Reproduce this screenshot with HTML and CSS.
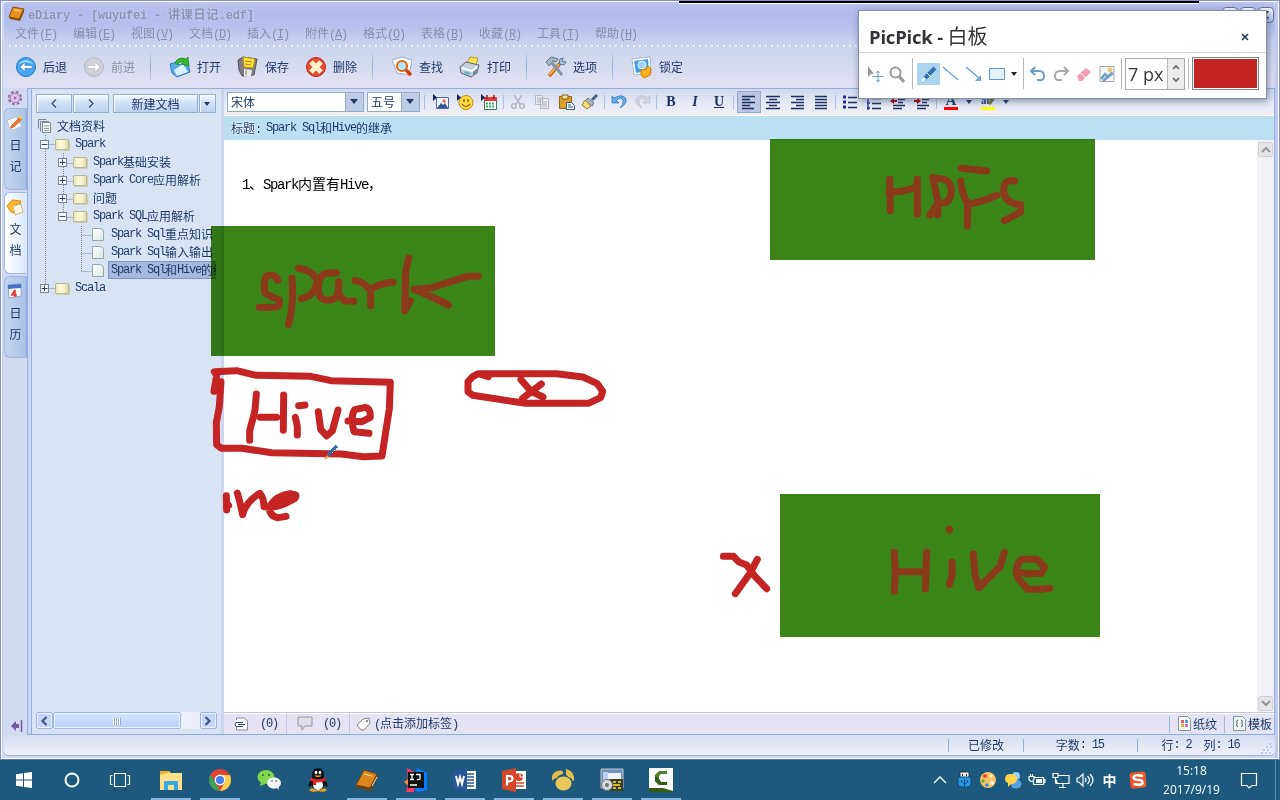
FILE: index.html
```html
<!DOCTYPE html>
<html lang="zh-CN">
<head>
<meta charset="utf-8">
<title>eDiary</title>
<link rel="stylesheet" href="styles.css">
</head>
<body>
<div class="desktop">
<div class="window">
  <header class="chrome">
    <div class="titlebar">
      <svg width="18" height="18" viewBox="0 0 18 18"><path d="M2 12L6 2l11 2-5 10z" fill="#e8931c" stroke="#8a4a10"/><path d="M2 12l10 2 5-10v3l-4 9-10-2z" fill="#8a4a10"/><path d="M7.500 5l6 1" stroke="#ffd070" stroke-width="1.500"/></svg>
      <span class="title"><span class="l">eDiary - [wuyufei - </span>讲课日记<span class="l">.edf]</span></span>
      <div class="winbtns"><i></i><i></i><i class="x">✕</i></div>
    </div>
    <nav class="menu">
      <span>文件<b>(<u>F</u>)</b></span><span>编辑<b>(<u>E</u>)</b></span><span>视图<b>(<u>V</u>)</b></span><span>文档<b>(<u>D</u>)</b></span><span>插入<b>(<u>I</u>)</b></span><span>附件<b>(<u>A</u>)</b></span><span>格式<b>(<u>O</u>)</b></span><span>表格<b>(<u>B</u>)</b></span><span>收藏<b>(<u>R</u>)</b></span><span>工具<b>(<u>T</u>)</b></span><span>帮助<b>(<u>H</u>)</b></span>
    </nav>
    <div class="dots"></div>
    <div class="toolbar">
      <div class="tool"><svg viewBox="0 0 24 24"><circle cx="12" cy="12" r="9.500" fill="#45a8ee" stroke="#2877c8"/><path d="M5 9a8 7 0 0 1 14 0q-7-4-14 0z" fill="#b8ecff"/><path d="M11 7l-5 5 5 5v-3.500h7v-3h-7z" fill="#fff" stroke="#2877c8" stroke-width=".6"/></svg>后退</div>
      <div class="tool off"><svg viewBox="0 0 24 24"><circle cx="12" cy="12" r="9.500" fill="#d0d0d6" stroke="#b8b8c2"/><path d="M13 7l5 5-5 5v-3.500H6v-3h7z" fill="#fff" stroke="#b8b8c2" stroke-width=".6"/></svg>前进</div>
      <div class="sep"></div>
      <div class="tool"><svg viewBox="0 0 24 24"><path d="M2 9l7-2 3 3 8-2 2 9-13 5-5-4z" fill="#5aa8e8" stroke="#3878b8"/><path d="M6 15l9-6 5 8-11 4z" fill="#d8f0ff"/><path d="M7 8q3-7 11-4l2-2 1 9-8-2 2-2q-4-1-5 3z" fill="#35b52c" stroke="#14821a" stroke-width=".7"/></svg>打开</div>
      <div class="tool"><svg viewBox="0 0 24 24"><path d="M2 5l5-3 14 2-3 16-12 1-3-6z" fill="#807c86" stroke="#565361"/><path d="M7 2l12 2-2 9-9-1z" fill="#ffe538" stroke="#b99418"/><path d="M8 14l8 1-1 6H8z" fill="#e8e8ef"/><path d="M10 15v5M9 6l7 1M9 9l6 1" stroke="#a28c30"/></svg>保存</div>
      <div class="tool"><svg viewBox="0 0 24 24"><circle cx="12" cy="12" r="9.500" fill="#e84830" stroke="#b82818"/><path d="M7 7l10 10M17 7L7 17" stroke="#fff5cc" stroke-width="5"/></svg>删除</div>
      <div class="sep"></div>
      <div class="tool"><svg viewBox="0 0 24 24"><path d="M2 5l10-3 10 3-3 15-12-2z" fill="#fff" stroke="#9daabc"/><circle cx="12" cy="11" r="5" fill="#b8e4ff" stroke="#e06a18" stroke-width="2.200"/><path d="M16 15l5 5" stroke="#d04010" stroke-width="3.500"/></svg>查找</div>
      <div class="tool"><svg viewBox="0 0 24 24"><path d="M9 8l3-6 8 1-2 7z" fill="#ffe54a" stroke="#a99a45"/><path d="M2 12l6-5 13 3-2 8-6 4-10-4z" fill="#c6ceda" stroke="#5a6674"/><path d="M4 13l10 3 5-4" stroke="#f7ffff" stroke-width="2" fill="none"/><path d="M7 16l6 2-2 2-5-2z" fill="#60b8d8"/><path d="M15 17l5-4v4l-5 4z" fill="#7b8793"/></svg>打印</div>
      <div class="sep"></div>
      <div class="tool"><svg viewBox="0 0 24 24"><path d="M5 21L18 6" stroke="#c87018" stroke-width="4"/><path d="M5 20L17 7" stroke="#f7b860" stroke-width="1.500"/><path d="M2 7l5-5 7 2-2 3-3-1-4 5z" fill="#a7b7c4" stroke="#637483"/><path d="M8 8l10 12" stroke="#8095a8" stroke-width="3"/><path d="M16 4l-1 5 5 1 2-3-4-1 1-3z" fill="#a7c4dc" stroke="#52789b"/></svg>选项</div>
      <div class="sep"></div>
      <div class="tool"><svg viewBox="0 0 24 24"><path d="M3 5l16-2 1 14-15 2z" fill="#439be5" stroke="#fff" stroke-width="2"/><path d="M2 4l18-2 1 16-17 2z" fill="none" stroke="#779ab9" stroke-width=".6"/><circle cx="12" cy="10" r="4" fill="#9bd0f8" stroke="#dff"/><path d="M11 15l5-1 2-3 3 3-1 6-6 3-3-3z" fill="#ffb31b" stroke="#d77800"/></svg>锁定</div>
    </div>
  </header>
  <div class="body">
    <aside class="rail">
      <div class="gear"><svg width="16" height="16" viewBox="0 0 16 16"><circle cx="8" cy="8" r="6" fill="none" stroke="#9b6fae" stroke-width="2.400" stroke-dasharray="2.800 1.900"/><circle cx="8" cy="8" r="4.500" fill="#dfc9e8" stroke="#a581b9"/><circle cx="8" cy="8" r="1.500" fill="#9b6fae"/></svg></div>
      <div class="tab"><svg width="18" height="18" viewBox="0 0 18 18"><path d="M1 6l9-3 6 9-9 4-4-3z" fill="#fff" stroke="#b7bfd0"/><path d="M5 12L14 3l2 2-8 8-3 1z" fill="#f07828" stroke="#c85010" stroke-width=".6"/><path d="M13 2l3 3" stroke="#f7c84a" stroke-width="2"/></svg><span>日</span><span>记</span></div>
      <div class="tab on"><svg width="18" height="18" viewBox="0 0 18 18"><path d="M1 8l5-6 9 1-1 3-6 1v8l-3-1z" fill="#ffb830" stroke="#df8618"/><path d="M7 8l8-2 2 8-8 3z" fill="#fffbe8" stroke="#d3b678"/></svg><span>文</span><span>档</span></div>
      <div class="tab"><svg width="18" height="18" viewBox="0 0 18 18"><path d="M2 3l13-1v12l-12 2z" fill="#fff" stroke="#8ea2c9"/><path d="M2 3l13-1v4L2 7z" fill="#4672c5"/><path d="M9 8l-3 5h5m-2-5v7" stroke="#e43838" stroke-width="1.700" fill="none"/></svg><span>日</span><span>历</span></div>
      <div class="collapse"><svg width="14" height="14" viewBox="0 0 14 14"><path d="M7 2L2 7l5 5V9h3V5H7z" fill="#7658a0"/><path d="M12.500 1v12" stroke="#7658a0" stroke-width="1.500"/></svg></div>
    </aside>
    <aside class="side">
      <div class="sidebtns"><div class="btn"><svg width="6" height="9"><path d="M5 .5L1 4.500l4 4" class="chev"/></svg></div><div class="btn"><svg width="6" height="9"><path d="M1 .5l4 4-4 4" class="chev"/></svg></div><div class="btn new">新建文档</div><div class="btn drop"><s class="tri"></s></div></div>
      <div class="tree">
        <svg class="guides" width="60" height="160" viewBox="0 0 60 160"><path d="M9.500 0v155M9.500 9.500h14M9.500 153.500h14M27.500 18v66M27.500 28.500h14M27.500 46.500h14M27.500 64.500h14M27.500 82.500h14M45.500 91v46M45.500 100.500h11M45.500 118.500h11M45.500 136.500h11" stroke="#7d8798" stroke-dasharray="1 1" fill="none"/></svg>
        <div class="node root"><svg width="15" height="16" viewBox="0 0 15 16"><path d="M1.500 10.500v-9h8" fill="none" stroke="#7d8b92"/><path d="M3.500 13.500v-10h8" fill="none" stroke="#7d8b92"/><path d="M5.500 4.500h8v10h-8z" fill="#f4faf4" stroke="#7d8b92"/><path d="M7 8h5M7 10.500h5M7 12.500h5" stroke="#8c9a9a"/></svg>文档资料</div>
        <div class="node"><i class="exp">−</i><i class="folder"></i><span class="l">Spark</span></div>
        <div class="node n2"><i class="exp">+</i><i class="folder"></i><span class="l">Spark</span>基础安装</div>
        <div class="node n2"><i class="exp">+</i><i class="folder"></i><span class="l">Spark Core</span>应用解析</div>
        <div class="node n2"><i class="exp">+</i><i class="folder"></i>问题</div>
        <div class="node n2"><i class="exp">−</i><i class="folder"></i><span class="l">Spark SQL</span>应用解析</div>
        <div class="node n3"><i class="file"></i><span class="l">Spark Sql</span>重点知识</div>
        <div class="node n3"><i class="file"></i><span class="l">Spark Sql</span>输入输出</div>
        <div class="node n3"><i class="file"></i><span class="sel"><span class="l">Spark Sql</span>和<span class="l">Hive</span>的继</span></div>
        <div class="node"><i class="exp">+</i><i class="folder"></i><span class="l">Scala</span></div>
      </div>
      <div class="hscroll"><div class="sbtn"><svg width="8" height="10"><path d="M6.500 1l-4 4 4 4" class="arr"/></svg></div><div class="thumb"><i></i></div><div class="track"></div><div class="sbtn"><svg width="8" height="10"><path d="M1.500 1l4 4-4 4" class="arr"/></svg></div></div>
    </aside>
    <main class="editor">
      <div class="format">
        <div class="combo font"><span>宋体</span><em><s class="tri"></s></em></div>
        <div class="combo size"><span>五号</span><em><s class="tri"></s></em></div>
        <div class="fsep f9"></div>
        <div class="fb"><svg viewBox="0 0 18 18"><path d="M1 1l4 3.500L1 8z" fill="#152358"/><path d="M4.500 4.500h12v11h-12z" fill="#eef6ff" stroke="#526aa0"/><path d="M5 15l4-5 2 2 2-2 3 5z" fill="#35588b"/><circle cx="12" cy="8" r="1.800" fill="#f07840"/></svg></div>
        <div class="fb"><svg viewBox="0 0 18 18"><circle cx="10" cy="9.500" r="7" fill="#ffda3a" stroke="#c88818"/><path d="M1 1l4 3.500L1 8z" fill="#152358"/><path d="M8 6v3m4-3v3M6 11q4 5 8 0" fill="none" stroke="#6d4b10" stroke-width="1.200"/></svg></div>
        <div class="fb"><svg viewBox="0 0 18 18"><path d="M4.500 4.500h12v12h-12z" fill="#fff" stroke="#27824b"/><path d="M4 4h13v4H4z" fill="#e33a35"/><path d="M6 10.500h9M6 13.500h9" stroke="#48a868" stroke-width="2" stroke-dasharray="2 1"/><path d="M7 2v4m7-4v4" stroke="#922" stroke-width="1.500"/><path d="M1 1l4 3.500L1 8z" fill="#152358"/></svg></div>
        <div class="fsep f5"></div>
        <div class="fb"><svg viewBox="0 0 18 18" fill="none" stroke="#b4b6c1" stroke-width="1.500"><path d="M5 2l6 9M13 2L7 11"/><circle cx="5" cy="13" r="2.300"/><circle cx="13" cy="13" r="2.300"/></svg></div>
        <div class="fb"><svg viewBox="0 0 18 18" fill="#e9eaf1" stroke="#b4b6c1"><path d="M2.500 2.500h7v9h-7zM7.500 5.500h8v10h-8z"/><path d="M9 9h5M9 11h5M9 13h5M4 5h3M4 7h3M4 9h3"/></svg></div>
        <div class="fb"><svg viewBox="0 0 18 18"><path d="M2.500 3.500h12v12h-12z" fill="#d8a32a" stroke="#8d6518"/><path d="M5 2h6v4H5z" fill="#f5df8b" stroke="#856522"/><path d="M9.500 9.500h5l3 3v4h-8z" fill="#f6f8ff" stroke="#405887"/><path d="M11 12h3m-3 2h5" stroke="#405887"/></svg></div>
        <div class="fb"><svg viewBox="0 0 18 18"><path d="M11 7l5-5" stroke="#4a5e95" stroke-width="3"/><path d="M7 5l6 5-2 3-7-5z" fill="#a9b4bd" stroke="#68748a"/><path d="M4 7l6 6-4 3-5-4z" fill="#f4dd77" stroke="#9e8530"/></svg></div>
        <div class="fsep f5"></div>
        <div class="fb"><svg viewBox="0 0 18 18"><path d="M2 3v7h7L6.500 7.500Q11 3 13 7q1 4-3 8 7-4 6-9-3-6-12-1z" fill="#62acea" stroke="#2d6fb4" stroke-width=".7"/></svg></div>
        <div class="fb"><svg viewBox="0 0 18 18"><path d="M16 3v7H9l2.500-2.500Q7 3 5 7q-1 4 3 8-7-4-6-9 3-6 12-1z" fill="#d5d7e0" stroke="#b5b8c5" stroke-width=".7"/></svg></div>
        <div class="fsep w4"></div>
        <div class="fb bt"><b>B</b></div><div class="fb bt"><em>I</em></div><div class="fb bt"><u>U</u></div>
        <div class="fsep f6"></div>
        <div class="fb on"><svg viewBox="0 0 18 18" class="al"><path d="M2 3.500h13M2 6.500h8M2 9.500h13M2 12.500h8M2 15.500h12"/></svg></div>
        <div class="fb"><svg viewBox="0 0 18 18" class="al"><path d="M2 3.500h14M5 6.500h8M2 9.500h14M5 12.500h8M2 15.500h14"/></svg></div>
        <div class="fb"><svg viewBox="0 0 18 18" class="al"><path d="M3 3.500h13M8 6.500h8M3 9.500h13M8 12.500h8M3 15.500h13"/></svg></div>
        <div class="fb"><svg viewBox="0 0 18 18" class="al"><path d="M3 3.500h12M3 6.500h12M3 9.500h12M3 12.500h12M3 15.500h12"/></svg></div>
        <div class="fsep f5"></div>
        <div class="fb"><svg viewBox="0 0 18 18" class="al"><path d="M2 4h3M2 9h3M2 14h3" stroke="#202da0" stroke-width="3"/><path d="M7 4.500h9M7 9.500h9M7 14.500h9"/></svg></div>
        <div class="fb"><svg viewBox="0 0 18 18" class="al"><path d="M3 2v15M2 5h3m-3 5h3m-3 5h3" stroke="#202d90"/><path d="M7 5.500h9M7 10.500h9M7 15.500h9"/></svg></div>
        <div class="fb"><svg viewBox="0 0 18 18" class="al"><path d="M3 3.500h13M9 6.500h7M9 9.500h5M4 12.500h12M4 15.500h9"/><path d="M1 8l4-3v2h3v2H5v2z" fill="#b20000" stroke="none"/></svg></div>
        <div class="fb"><svg viewBox="0 0 18 18" class="al"><path d="M3 3.500h13M9 6.500h7M9 9.500h5M4 12.500h12M4 15.500h9"/><path d="M8 8L4 5v2H1v2h3v2z" fill="#b20000" stroke="none"/></svg></div>
        <div class="fsep f5"></div>
        <div class="fb color"><b>A</b></div><div class="dd"><s class="tri sm"></s></div>
        <div class="fb mark"><b>ab</b><svg viewBox="0 0 18 18"><path d="M8 12l7-9" stroke="#777830" stroke-width="3"/></svg></div><div class="dd"><s class="tri sm"></s></div>
      </div>
      <div class="doctitle"><span class="lab">标题<span class="l">:</span></span><span class="l">Spark Sql</span>和<span class="l">Hive</span>的继承</div>
      <div class="page">
        <div class="text"><span class="l">1</span>、<span class="l">Spark</span>内置有<span class="l">Hive</span>，</div>
        <div class="vscroll"><div><svg width="10" height="7"><path d="M1 6l4-4 4 4" class="garr"/></svg></div><div><svg width="10" height="7"><path d="M1 1l4 4 4-4" class="garr"/></svg></div></div>
      </div>
      <div class="foot">
        <div class="f1"><svg width="16" height="14" viewBox="0 0 16 14"><path d="M3.500 3V1h8l3 3v9h-11v-3" fill="#f7f6fb" stroke="#8e8ba5"/><path d="M10 5.500H3q-2 2 0 4h7M5 7.500h7" fill="none" stroke="#344a70"/></svg><span class="l">(0)</span></div>
        <div class="f2"><svg width="16" height="15" viewBox="0 0 16 15"><path d="M1 1h14v9H8l-3 4v-4H1z" fill="#dfdde7" stroke="#9996a7"/></svg><span class="l">(0)</span></div>
        <div class="f3"><svg width="15" height="14" viewBox="0 0 15 14"><path d="M1 8l6-6 6-1 1 5-6 7H5z" fill="#fff" stroke="#818990"/><circle cx="11" cy="4" r="1.300" fill="#89919a"/></svg><span><span class="l">(</span>点击添加标签<span class="l">)</span></span></div>
        <div class="paper"><svg width="13" height="15" viewBox="0 0 13 15"><path d="M.5.500h9l3 3v11H.5z" fill="#fff" stroke="#7c9a9a"/><path d="M3 4h3v3H3z" fill="#f05858"/><path d="M7 4h3v3H7z" fill="#4499e8"/><path d="M3 8h3v3H3z" fill="#f5a838"/><path d="M7 8h3v3H7z" fill="#ee64bb"/></svg>纸纹</div>
        <div class="tpl"><svg width="13" height="15" viewBox="0 0 13 15"><path d="M.5.500h9l3 3v11H.5z" fill="#eff5f2" stroke="#7c9a9a"/><path d="M5 4Q3 4 4 7.500 3 11 5 11M8 4q2 0 1 3.500Q10 11 8 11" fill="none" stroke="#555"/></svg>模板</div>
      </div>
    </main>
  </div>
  <footer class="status"><div class="s1">已修改</div><div class="s2">字数<span class="l">: 15</span></div><div class="s3">行<span class="l">: 2&nbsp; </span>列<span class="l">: 16</span><svg class="grip" width="12" height="12"><path d="M9 2h2M6 5h2M10 5h2M3 8h2M7 8h2M1 11h2M5 11h2M9 11h2" stroke="#b5bddd" stroke-width="1.500"/></svg></div></footer>
</div>
<div class="taskbar">
  <div class="task t0"><svg viewBox="0 0 24 24" fill="#fff"><path d="M4 6.200l7-1V11.500H4zM12 5l8-1v7.500h-8zM4 12.500h7v6.300l-7-1zM12 12.500h8V20l-8-1z"/></svg></div>
  <div class="task t0"><svg viewBox="0 0 24 24"><circle cx="12" cy="12" r="6.500" fill="none" stroke="#fff" stroke-width="2"/></svg></div>
  <div class="task t0"><svg viewBox="0 0 24 24" fill="none" stroke="#fff" stroke-width="1.100"><path d="M6.500 5.500h11v13h-11zM4.500 7.500h-2v9h2M19.500 7.500h2v9h-2"/></svg></div>
  <div class="task run first"><svg viewBox="0 0 24 24"><path d="M1 3h9l2 2h11v17H1z" fill="#ffe08a"/><path d="M1 3h9v2l-9 2z" fill="#eeb62c"/><path d="M5 22v-9h14v9h-4v-5H9v5z" fill="#33aae5"/></svg></div>
  <div class="task run"><svg viewBox="0 0 24 24"><circle cx="12" cy="12" r="11" fill="#e24334"/><path d="M2.500 6.500L7.500 15l4.500 8A11 11 0 0 1 2.500 6.500z" fill="#35a454"/><path d="M12 7h9.800A11 11 0 0 1 12 23l5-9z" fill="#fcd04b"/><circle cx="12" cy="12" r="5.400" fill="#fff"/><circle cx="12" cy="12" r="4.100" fill="#477ff0"/></svg></div>
  <div class="task"><svg viewBox="0 0 24 24"><ellipse cx="9" cy="9" rx="8.500" ry="7" fill="#82d84a"/><path d="M4 14l-1 4 5-2z" fill="#82d84a"/><ellipse cx="17" cy="15" rx="7" ry="5.800" fill="#f1f3f4"/><path d="M19 19l3 3-1-4z" fill="#f1f3f4"/><g fill="#31613a"><circle cx="6" cy="7" r="1"/><circle cx="12" cy="7" r="1"/><circle cx="15" cy="13" r=".8"/><circle cx="19" cy="13" r=".8"/></g></svg></div>
  <div class="task"><svg viewBox="0 0 24 24"><ellipse cx="8" cy="22" rx="4.500" ry="1.700" fill="#efa31a"/><ellipse cx="16" cy="22" rx="4.500" ry="1.700" fill="#efa31a"/><path d="M6 10Q5 0 12 0t6 10q4 5 3.500 9-1.500 0-3-2-1 5-6.500 5t-6.500-5q-1.500 2-3 2Q2 15 6 10z" fill="#10131a"/><ellipse cx="12" cy="17" rx="5" ry="5" fill="#fff"/><path d="M5 9.500q7 4 14 0l1 3q-8 4-16 0zM7 13h3v4H7z" fill="#e62626"/><ellipse cx="10" cy="4.500" rx="1.300" ry="1.800" fill="#fff"/><ellipse cx="14" cy="4.500" rx="1.300" ry="1.800" fill="#fff"/><path d="M8 7.500h8q-4 3-8 0z" fill="#f3ae1b"/></svg></div>
  <div class="task run"><svg viewBox="0 0 24 24"><path d="M1 17L9 2l13 4-7 14z" fill="#d98520" stroke="#744010"/><path d="M1 17l14 3 7-14v4l-6 13L2 20z" fill="#713f10"/><path d="M9 6l8 2M17 18l5-9" stroke="#ffe48c"/></svg></div>
  <div class="task run multi"><svg viewBox="0 0 24 24"><path d="M3 0l9 5-2 19H2l2-8z" fill="#ff3568"/><path d="M0 14l7-5v11z" fill="#ff8f2b"/><path d="M13 0l10 5v17l-9 2-5-5z" fill="#087dff"/><path d="M4 4h16v16H4z" fill="#111"/><path d="M6 6.500h4M8 6.500v5M6 11.500h4M12 6.500h4v4q0 1.500-3 1M6 17h7" stroke="#fff" stroke-width="1.300" fill="none"/></svg></div>
  <div class="task run"><svg viewBox="0 0 24 24"><path d="M12 3h11v18H12z" fill="#fff"/><path d="M14 6h7M14 9h7M14 12h7M14 15h7M14 18h7" stroke="#285699" stroke-width="1.300"/><path d="M0 3l14-3v24L0 21z" fill="#285699"/><path d="M3 8l2 8 2-7 2 7 2-8" fill="none" stroke="#fff" stroke-width="1.900"/></svg></div>
  <div class="task run"><svg viewBox="0 0 24 24"><path d="M12 3h12v18H12z" fill="#fff"/><path d="M14 15h8M14 18h8" stroke="#d44829" stroke-width="1.500"/><circle cx="17" cy="9" r="4" fill="#d44829"/><path d="M18 4v5h4" stroke="#fff" fill="none"/><path d="M0 3l14-3v24L0 21z" fill="#d44829"/><path d="M5 17.500V8h2.500q3 0 3 2.700t-5 2.700" fill="none" stroke="#fff" stroke-width="2.200"/></svg></div>
  <div class="task run"><svg viewBox="0 0 24 24"><path d="M1 13Q0 5 6 3q7-2 6 3-5 1-6 4-3 0-5 3zM15 1q9 2 8 12-1 1-3-3-4-1-5-4z" fill="#e5bc4b"/><ellipse cx="12.500" cy="15.500" rx="8" ry="7" fill="#e9c75a"/></svg></div>
  <div class="task run"><svg viewBox="0 0 24 24"><path d="M1 1h22v19H1z" fill="#6f91bd" stroke="#bfc7c7"/><path d="M7 5h14v6H7z" fill="#eef4ff"/><path d="M3 4h5v9H3z" fill="#bdd2f0"/><path d="M10 11h13v12H8z" fill="#3a3b28"/><path d="M13 14h3m2 0h3m-8 3h7m-7 3h3m2 0h3" stroke="#ffe72c" stroke-width="1.500"/><circle cx="7" cy="17" r="5.500" fill="#d8dadd" stroke="#657078"/><circle cx="7" cy="17" r="2" fill="#687784"/></svg></div>
  <div class="task run"><svg viewBox="0 0 24 24"><path d="M0 0h24v23H0z" fill="#fff"/><path d="M0 20h14l10 3v1H0z" fill="#315c13"/><path d="M18 3h-8L6 7v6l4 4h8v-3h-6l-2-3V8l2-2h6z" fill="#55812b"/><path d="M6 7v6l4 4h8v-3h-6l-2-3z" fill="#315c13"/></svg></div>
  <div class="tray">
    <div><svg viewBox="0 0 18 18" fill="none" stroke="#fff" stroke-width="1.300"><path d="M3 12l6-6 6 6"/></svg></div>
    <div><svg viewBox="0 0 18 18"><path d="M5 1h9v6H5z" fill="#edf4f8" stroke="#333"/><path d="M7 3h1v2H7zM11 3h1v2h-1z" fill="#222"/><path d="M3 6h13v7q0 3-4 3H7q-4 0-4-3z" fill="#2a99df" stroke="#0d4c80"/><path d="M9.500 8v7M6.500 9v2l3 2 3-2V9" stroke="#064b89" fill="none"/></svg></div>
    <div><svg viewBox="0 0 18 18"><circle cx="9" cy="9" r="8" fill="#f5c16b"/><g><circle cx="6" cy="5" r="2" fill="#e64b32"/><circle cx="12" cy="5" r="1.800" fill="#fff1b0"/><circle cx="4" cy="10" r="1.700" fill="#6cad41"/><circle cx="8" cy="14" r="1.800" fill="#408bc8"/><circle cx="13" cy="12" r="2" fill="#fff3db"/></g></svg></div>
    <div><svg viewBox="0 0 18 18"><circle cx="12" cy="5" r="4" fill="#8bd0ff"/><ellipse cx="12" cy="13" rx="5.500" ry="4.500" fill="#58a2df"/><path d="M1 8q0-5 6-5t6 5-6 5l-3 3v-4q-3-1-3-4z" fill="#ffd34b"/></svg></div>
    <div><svg viewBox="0 0 18 18" fill="none" stroke="#fff" stroke-width="1.200"><path d="M5.500 6.500h10v7h-10v-3M15.500 8.500h1.500v3h-1.500M1 5.500h5v3q-1 2-2.500 2T1 8.500zM2.500 5V3M4.500 5V3"/><path d="M8 8h6v4H8z" fill="#fff" stroke="none"/></svg></div>
    <div><svg viewBox="0 0 18 18" fill="none" stroke="#fff" stroke-width="1.200"><path d="M6 4.500h11v8H4.500V9M11 13v3M7 16.500h7M1 2.500h5v4H1zM3.500 7v5H6"/></svg></div>
    <div><svg viewBox="0 0 18 18" fill="none" stroke="#fff" stroke-width="1.200"><path d="M1 7h2l4-4v12l-4-4H1zM9 7q2 2 0 4M11.500 5q4 4 0 8M14 3q6 6 0 12"/></svg></div>
    <div class="ime">中</div>
    <div class="sg"><svg viewBox="0 0 18 18"><rect x="1" y="1" width="16" height="16" rx="3" fill="#ee5528" transform="rotate(-5 9 9)"/><path d="M14 5Q5 3 4.500 6.500 5 9 10 9q4 0 3.500 3-1 3-9 1" fill="none" stroke="#fff" stroke-width="2.500"/></svg></div>
    <div class="clock"><span>15:18</span><span>2017/9/19</span></div>
    <div class="note"><svg viewBox="0 0 18 18" fill="none" stroke="#fff" stroke-width="1.200"><path d="M1.500 2.500h15v12H12L9 17l-2-2.500H1.500z"/></svg></div>
  </div>
</div>
<svg class="hl" width="1280" height="800"><path d="M770 139h325v121H770zM211 226h284v130H211zM780 494h320v143H780z" fill="#3b8418"/></svg>
<svg class="ink" width="1280" height="800" viewBox="0 0 1280 800">
  <g fill="none" stroke-width="21" stroke-linecap="round" stroke-linejoin="round">
    <g stroke="#8a3a18" transform="translate(200 220) scale(.33333)"><path d="M233 181Q230 163 202 166Q190 175 194 218Q210 228 238 240Q240 255 233 260Q205 263 178 262M276 175Q280 230 275 265Q270 300 265 314M296 145Q330 148 352 178Q348 208 331 225L304 236M409 159Q370 155 360 174Q350 210 361 232Q380 248 405 235Q420 215 416 185M416 190Q410 225 433 242L461 244M465 181Q490 185 512 211L512 257M512 208Q540 190 579 187M626 114L617 155L614 273L631 243M835 169L802 169L695 203L642 208L690 228L745 255"/></g>
    <g stroke="#c42424" transform="translate(200 220) scale(.33333)"><path d="M42 514L50 466L43 455L110 452L169 466L332 469L393 482L571 487L568 566L546 708L490 710L425 702L215 698L126 685L64 685L50 674L49 608L58 560L63 485M169 522L165 571L149 633L149 661M251 525L250 631M180 592L230 592M296 557L315 555M286 592L292 619L292 645M355 575L362 628L380 648L397 633L414 570M444 603L486 605L511 592Q512 565 496 562L464 569Q450 590 462 635L507 640M865 470L835 461L818 470L804 485V515L818 526L976 550L1165 550L1202 533L1208 514L1192 491L1149 471L1070 461H835M963 479L993 514L1029 531M1024 492L968 535"/><path d="M79 827L80 870M80 858L86 856M112 819Q120 845 128 884Q137 845 180 820Q192 835 192 860L215 861Q245 860 285 835L286 825L270 821Q230 825 208 860Q208 890 235 893L258 889"/><path d="M235 838L285 828" stroke-width="27"/></g>
    <g stroke="#8a3a18" transform="translate(710 130) scale(.33333)"><path d="M539 148L541 242M622 148V252M536 187L575 184L616 173M668 142Q678 180 684 220L683 255M670 146Q730 140 723 190Q720 225 684 219L660 255M754 115L830 123M752 154Q755 190 773 220L772 288M775 224L826 210L861 196M914 153Q880 145 881 184Q885 220 932 224V246L883 272"/></g>
    <g transform="translate(700 485) scale(.33333)"><path stroke="#c42424" d="M70 214H100L117 231L140 240L163 272L200 311M172 223L151 263L106 326"/><path stroke="#8a3a18" d="M583 202L586 260L583 319M680 202L676 312M590 260H679M748 133L749 134M756 232L757 268L748 299M820 207L825 270L837 308L901 244L913 202M965 263L980 266L1025 265L1034 246L1010 223H965Q940 245 954 280L983 313H1020L1049 310"/></g>
  </g>
</svg>
<svg class="pen" width="15" height="16" viewBox="0 0 15 16"><path d="M4 11l9-9" stroke="#326ba6" stroke-width="3.500"/><path d="M8 9l5-5" stroke="#fff" stroke-width="1" stroke-dasharray="1.500 1.500"/><path d="M1 15l3-3" stroke="#e9a35a" stroke-width="2"/></svg>
<div class="blackline"></div>
<section class="picpick">
  <div class="pphead"><span class="pp"><b>PicPick - </b>白板</span><svg width="8" height="8"><path d="M1 1l6 6M7 1L1 7" stroke="#16325c" stroke-width="1.500"/></svg></div>
  <div class="pptools">
    <svg class="pa" viewBox="0 0 18 18"><path d="M2 1v11l3-3 3 0z" fill="#999"/><path d="M12 6v11M6.500 11.500h11M10.500 8L12 6l1.500 2M10.500 15l1.500 2 1.500-2" stroke="#6b9dcb" fill="none"/></svg>
    <svg viewBox="0 0 18 18" fill="none" stroke="#9a9a9a"><circle cx="7.500" cy="7.500" r="5" stroke-width="2"/><path d="M11 11l5 6" stroke-width="3"/></svg>
    <i class="pv"></i>
    <div class="psel"><svg viewBox="0 0 18 18"><path d="M5 13L15 3" stroke="#2e70ad" stroke-width="4"/><path d="M7 8l4 4" stroke="#fff"/><path d="M2 16l3-3" stroke="#fff" stroke-width="2"/></svg></div>
    <svg viewBox="0 0 18 18"><path d="M1 2l15 13" stroke="#6fa6d5" stroke-width="1.500"/></svg>
    <svg class="g" viewBox="0 0 18 18"><path d="M1 2l13 11" stroke="#6fa6d5" stroke-width="1.500"/><path d="M16 10v6h-6z" fill="#6fa6d5"/></svg>
    <svg class="g" viewBox="0 0 18 18"><path d="M1.500 3.500h15v11h-15z" fill="#e4f1fb" stroke="#5998cf"/></svg><s class="tri pt"></s>
    <i class="pv v2"></i>
    <svg viewBox="0 0 18 18" fill="none" stroke="#6b9dcb" stroke-width="2"><path d="M6 2L2 6l4 4M2 6h8q5 0 5 5t-5 4H8"/></svg>
    <svg class="g" viewBox="0 0 18 18" fill="none" stroke="#a9a9a9" stroke-width="2"><path d="M12 2l4 4-4 4M16 6H8q-5 0-5 5t5 4h2"/></svg>
    <svg class="g" viewBox="0 0 18 18"><path d="M2 11L11 3l5 4-9 9H4z" fill="#f59bb2"/><path d="M5 8l6 5" stroke="#fff"/></svg>
    <svg class="g" viewBox="0 0 18 18"><path d="M2 1.500h14v15H2z" fill="#f7f7f7" stroke="#aaa"/><circle cx="12" cy="5" r="2.500" fill="#f2c783"/><path d="M3 14l4-5 3 3 5-4M5 16l9-8" stroke="#6b9dcb" stroke-width="2.500" fill="none"/></svg>
    <i class="pv v3"></i>
    <div class="px"><span>7 px</span><div><svg width="8" height="6"><path d="M1 5l3-3 3 3"/></svg><svg width="8" height="6"><path d="M1 1l3 3 3-3"/></svg></div></div>
    <i class="pv v4"></i><div class="red"></div>
  </div>
</section>
</div>
</body>
</html>
```
FILE: styles.css
```css
*{box-sizing:border-box}
body{margin:0;overflow:hidden;font:12px/18px "Noto Sans CJK SC",sans-serif;color:#203a68}
svg{display:block;flex:none}
i,em{font-style:normal}
s{text-decoration:none}
.desktop{position:relative;width:1280px;height:800px;display:flex;flex-direction:column;overflow:hidden}
.l{font:12px/16px "Liberation Mono",monospace;letter-spacing:-1.2px;white-space:pre}
.window{height:760px;display:flex;flex-direction:column;border:1px solid #8490cb;border-bottom-color:#5d71b5;padding:1px 4px 3px 3px;background:#cdd6f2;box-shadow:inset 0 0 0 1px #fff,inset -4px 0 #c0caef}
.chrome{height:86px;background:linear-gradient(#bcc5f0 0,#b1baea 12%,#b5c0ec 28%,#cbd3f0 48%,#d2d9f0 68%,#e1e0f2 94%);border-radius:4px;display:flex;flex-direction:column}
.titlebar{height:22px;display:flex;align-items:center;padding:2px 0 0 3px;gap:3px}
.title{font-weight:bold;color:#8a94b5;letter-spacing:.7px;text-shadow:0 0 3px #d8defa}
.title .l{font-weight:bold;letter-spacing:-.2px}
.winbtns{display:flex;gap:2px;margin-left:auto;padding:2px 1px 0 0}
.winbtns i{width:16px;height:16px;border:1px solid #66749f;border-radius:4px;background:linear-gradient(#fff,#aebce5)}
.winbtns .x{font:bold 14px/14px "DejaVu Sans",sans-serif;color:#101b45}
.menu{height:20px;display:flex;padding-left:11px;color:#8690ad}
.menu span{width:58px;white-space:nowrap;line-height:18px}
.menu b{font:12px "Liberation Mono",monospace;letter-spacing:-1.200px}
.dots{height:2px;margin:1px 6px 0 5px;background:repeating-linear-gradient(90deg,#f0f3ff 0 2px,#bcc8ee 2px 3px,transparent 3px 6px)}
.toolbar{height:38px;display:flex;align-items:center;padding:1px 0 0 10px}
.tool{width:68px;display:flex;align-items:center;gap:5px}
.tool svg{width:24px;height:24px}
.off{color:#8f929c}
.sep{width:18px;height:28px;background:linear-gradient(#b9c9ed,#91afe0,#c4d0ef) 0 0/1px 100% no-repeat}
.body{height:647px;display:flex}
.rail{width:23px;display:flex;flex-direction:column;align-items:stretch;background:#d2daf2;gap:2px}
.gear{height:18px;padding:2px 3px}
.tab{height:82px;border:1px solid #9eb6e0;border-right-color:#8eacdf;border-radius:6px 0 0 6px;background:linear-gradient(90deg,#c3d6ee,#a9c2e6);display:flex;flex-direction:column;align-items:center;padding-top:5px}
.tab svg{margin-bottom:3px}
.tab span{height:20.500px;line-height:20px}
.on.tab{background:linear-gradient(90deg,#fff,#dce9fa);border-right-color:#dce9fa}
.collapse{margin:auto 0 2px 5px}
.side{width:197px;border:1px solid #92afe2;border-right:0;background:#d8e4f4;display:flex;flex-direction:column;padding:5px 8px 5px 8px;box-shadow:inset 3px 0 #c9d7f1,inset 4px 0 #92afe2,inset -3px 0 #cbd5f0}
.sidebtns{display:flex;height:19px;gap:1px;width:181px}
.btn{width:36px;border:1px solid #8fafd5;box-shadow:inset 1px 1px #fff;background:linear-gradient(#f4faff,#cfe1f6 45%,#bcd3ef);display:flex;align-items:center;justify-content:center}
.chev{fill:none;stroke:#304d78;stroke-width:1.200}
.btn.new{width:85px;margin-left:3px}.btn.drop{width:17px}
.tri{border:4px solid transparent;border-top:5px solid #203a68;border-bottom:0;width:0;height:0;flex:none}
.tri.sm,.drop .tri{border-width:3px;border-top-width:4px;border-bottom:0}
.tree{position:relative;width:180px;overflow:hidden;margin-top:4px;padding-left:4px}
.guides{position:absolute;left:0;top:18px}
.node{position:relative;display:flex;align-items:center;height:18px;white-space:nowrap}
.node.root{gap:5px;margin-left:-2px}
.root svg{margin-left:-1px}
.n2{padding-left:18px}.n3{padding-left:52px}
.exp{width:9px;height:9px;border:1px solid #7887a1;background:#f3f7fc;font:11px/7px "DejaVu Sans Mono",monospace;text-align:center;flex:none}
.folder{width:14px;height:11px;margin:0 6px 0 6px;border:1px solid #bab892;border-radius:1px;background:linear-gradient(90deg,#efe9c0 2px,#fbf7d8 3px,#f6f1cc 9px,#e4dfb4 10px);box-shadow:1px 1px #cfceb4;flex:none}
.file{width:12px;height:13px;margin:0 7px 0 0;border:1px solid #94a7a6;background:linear-gradient(135deg,#fff,#dce8e4);border-radius:0 4px 0 0;flex:none}
.sel{background:#a5b8de;box-shadow:inset 0 0 0 1px #7f95c8;margin-left:-3px;padding-left:3px;height:18px;display:flex;align-items:center}
.hscroll{display:flex;margin-top:auto;height:17px;width:181px;background:#eeeefa}
.sbtn{width:17px;border:1px solid #9db4e4;border-radius:2px;background:#c5d7f9;box-shadow:inset 0 0 0 1px #e9f1ff;display:flex;align-items:center;justify-content:center}
.arr{stroke:#405780;stroke-width:2.200;fill:none}
.thumb{width:128px;border:1px solid #9db7e9;border-radius:2px;background:linear-gradient(#d6e4ff,#b9cffa);box-shadow:inset 0 0 0 1px #ecf4ff;padding:5px 0 0 59px}
.thumb i{display:block;width:8px;height:7px;background:repeating-linear-gradient(90deg,#fff 0 1px,#90acdc 1px 2px)}
.track{width:19px}
.editor{width:1052px;border:1px solid #92afe2;border-left:0;display:flex;flex-direction:column;background:#fff}
.format{height:27px;display:flex;align-items:center;background:linear-gradient(#d2daf1,#e7eaf6 60%,#f0eff8);padding-left:3px;border-bottom:1px solid #fff}
.combo{height:20px;border:1px solid #91abc8;background:#fff;display:flex}
.combo span{flex:1;padding-left:3px}
.combo em{width:18px;border-left:1px solid #91abc8;background:#bfcce8;display:flex;align-items:center;justify-content:center}
.font{width:137px;margin-right:3px}.size{width:53px}
.fsep{height:14px;background:linear-gradient(#abc2e6,#abc2e6) 50% 0/1px 100% no-repeat}
.w4{width:4px}.f5{width:5px}.f6{width:6px}.f9{width:9px}
.fb{width:24px;height:22px;display:flex;align-items:center;justify-content:center}
.fb svg{width:18px;height:18px}
.fb.on{background:#bdc7e5;border:1px solid #91abc8}
.al{fill:none;stroke:#1c2e61;stroke-width:1.300}
.bt{font:bold 14px "Liberation Serif",serif;color:#1c2e61}
.bt em{font-style:italic}
.dd{width:12px;display:flex;justify-content:center}
.color{font:bold 15px/14px "Liberation Serif",serif}
.color b{border-bottom:3px solid red;width:14px;text-align:center;height:17px}
.mark{position:relative;margin-left:1px;font:bold 11px/12px "Liberation Serif",serif}
.mark b{border-bottom:3px solid #ff0;width:14px;height:16px}
.mark svg{position:absolute;left:5px;top:1px}
.doctitle{height:24px;background:#bbe0f3;padding:1px 0 0 7px;display:flex;align-items:center;white-space:pre}
.lab{width:35px;text-shadow:0 0 2px #fff,0 0 2px #fff}
.page{height:573px;display:flex;justify-content:space-between}
.text{padding:33px 0 0 18px;font-size:14px;line-height:20px;color:#000}
.text .l{font-size:14px;letter-spacing:-1.4px}
.vscroll{width:17px;background:#f2f0f7;display:flex;flex-direction:column;justify-content:space-between;padding:2px 1px 1px}
.vscroll div{height:15px;background:#e6e6e9;border:1px solid #cfcfd5;border-radius:2px;display:flex;align-items:center;justify-content:center}
.garr{fill:none;stroke:#969699;stroke-width:2}
.foot{height:22px;background:#e5e3f3;border-top:1px solid #c6c3e5;box-shadow:inset 0 1px #fff;display:flex;align-items:stretch}
.foot>div{display:flex;align-items:center;white-space:nowrap}
.f1{width:63px;padding-left:9px;gap:11px;border-right:1px solid #c8c6e7}
.f2{width:63px;padding-left:10px;gap:10px;border-right:1px solid #c8c6e7}
.f3{padding-left:6px;gap:3px}
.foot .paper{margin-left:auto;padding-left:9px;gap:2px;width:55px;background:linear-gradient(#9bb8e5,#9bb8e5) 0 3px/1px 17px no-repeat}
.tpl{width:50px;padding-left:9px;gap:2px;background:linear-gradient(#9bb8e5,#9bb8e5) 0 3px/1px 17px no-repeat}
.status{height:21px;display:flex;background:linear-gradient(#d5def0,#efeff8);border-radius:0 0 5px 5px;border-bottom:1px solid #a5b0dc;padding-left:944px}
.status div{display:flex;align-items:center;white-space:pre;background:linear-gradient(#91afe0,#91afe0) 0 4px/1px 13px no-repeat}
.s1{width:75px;padding-left:20px}.s2{width:115px;padding-left:33px}.s3{width:138px;padding-left:24px}
.grip{margin:5px 3px 0 auto}
.taskbar{height:40px;background:#1c597c;display:flex;align-items:stretch}
.task{width:40px;margin-right:9px;display:flex;align-items:center;justify-content:center;flex:none}
.task svg{width:24px;height:24px}
.t0{width:48px;margin:0}.first{margin-left:7px}
.run{box-shadow:inset 0 -2px #86b7df}
.multi{background:linear-gradient(#5d84a0,#5d84a0) 32px 38px/1px 2px no-repeat}
.tray{margin-left:auto;width:353px;display:flex;align-items:center;border-right:1px solid #648eaa;margin-right:4px;padding-left:5px;color:#fff}
.tray>div{width:24.200px;display:flex;justify-content:center;flex:none}
.tray svg{width:18px;height:18px}
.ime{font:bold 14px "Noto Sans CJK SC",sans-serif}
.tray .sg{width:32px;padding-left:1px}
.tray .clock{width:76px;display:flex;flex-direction:column;align-items:center;font:12px/19px "Open Sans",sans-serif;padding-bottom:1px}
.tray .note{width:38px}
.hl,.ink{position:absolute;left:0;top:0}
.hl{mix-blend-mode:multiply}
.pen{position:absolute;left:324px;top:444px}
.blackline{position:absolute;left:679px;top:1px;width:520px;height:3px;border-bottom:1px solid #fff;background:#000}
.picpick{position:absolute;left:858px;top:10px;width:409px;height:89px;background:#fff;border:1px solid #8790a8;box-shadow:1px 2px 7px #33446688}
.pphead{height:42px;border-bottom:1px solid #d5d5d5;display:flex;align-items:center;justify-content:space-between;padding:10px 17px 0 10px;font:20px/28px "Open Sans","Noto Sans CJK SC",sans-serif;color:#343438}
.pp b{font-size:18.5px;letter-spacing:-.2px}
.pptools{display:flex;align-items:center;height:41px;padding-left:7px}
.pptools>*{flex:none}
.pptools svg{width:18px;height:18px}
.pptools .pa{margin-right:4px}
.pv{width:1px;height:31px;background:#b7b7b7;margin-left:6px}
.psel{width:23px;height:22px;background:#add4ef;margin:0 2px 0 4px;display:flex;align-items:center;justify-content:center}
.g{margin-left:5px}
.pt{border-width:3px;border-top:4px solid #222;border-bottom:0;margin-left:5px}
.v2{margin:0 5px 0 6px}.v3{margin-left:5px}.v4{margin-left:3px}
.px{width:60px;height:32px;border:1px solid #aaa;display:flex;margin-left:3px;font:18px/30px "Open Sans",sans-serif;color:#383840;white-space:nowrap}
.px span{width:42px;padding-left:2px}
.px div{width:17px;background:#ececec;border-left:1px solid #bbb;display:flex;flex-direction:column;align-items:center;justify-content:space-around;padding:2px 0}
.pptools .px svg{width:8px;height:6px;fill:none;stroke:#777;stroke-width:1.800}
.red{width:67px;height:33px;margin-left:3px;background:#c42424;border:1px solid #888;box-shadow:inset 0 0 0 1px #fff}
```
